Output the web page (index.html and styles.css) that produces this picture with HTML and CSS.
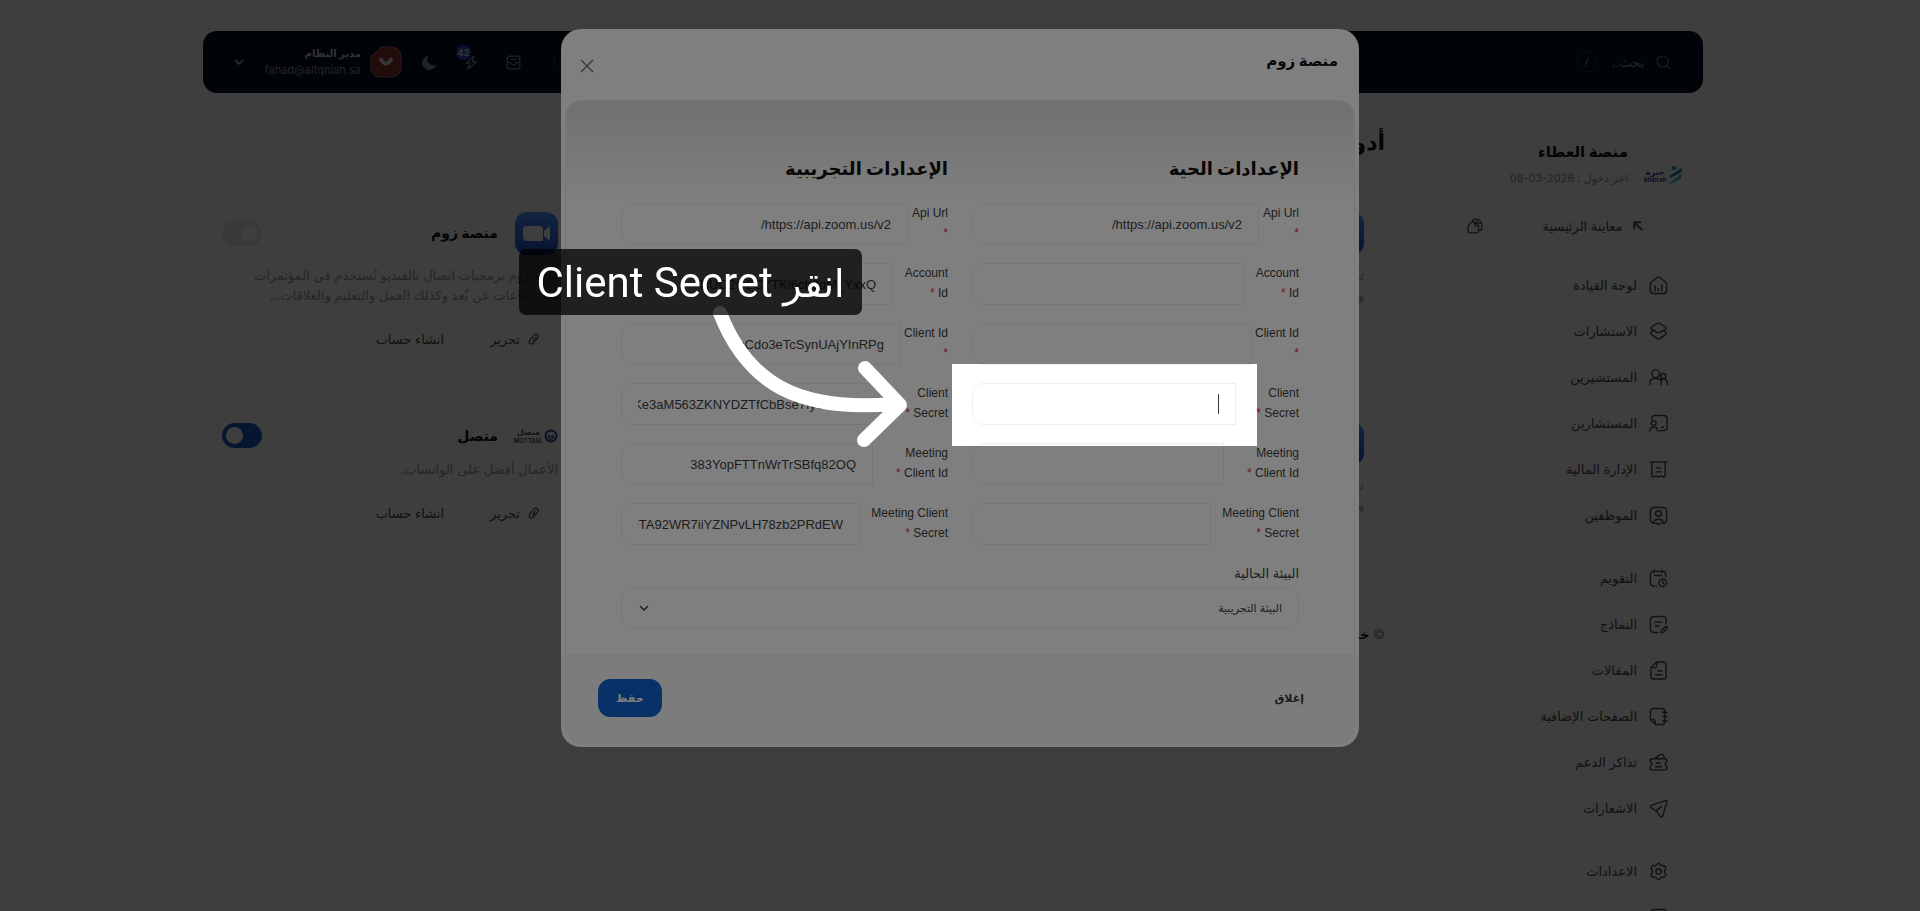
FILE: index.html
```html
<!DOCTYPE html>
<html lang="ar" dir="rtl">
<head>
<meta charset="utf-8">
<title>منصة زوم</title>
<meta name="viewport" content="width=device-width, initial-scale=1">
<link rel="stylesheet" href="styles.css">
</head>
<body>
<svg class="sprite" aria-hidden="true">
  <symbol id="i-search" viewBox="0 0 20 20"><circle cx="9.5" cy="9.5" r="8"/><path d="M15.500 15.500 18.500 18.500"/></symbol>
  <symbol id="i-inbox" viewBox="0 0 20 20"><rect x="1.500" y="1.500" width="17" height="17" rx="4"/><path d="M1.500 10h4c1 0 1 3 4.500 3s3.500-3 4.500-3h4M7 6h6"/></symbol>
  <symbol id="i-bolt" viewBox="0 0 20 20"><path d="M13 1 3 11h5l-3 8L17 9h-6z"/></symbol>
  <symbol id="i-moon" viewBox="0 0 20 20"><path fill="currentColor" stroke="none" d="M8.500 1A9.500 9.500 0 1 0 19 12.500 8 8 0 0 1 8.500 1z"/></symbol>
  <symbol id="i-chev" viewBox="0 0 10 10"><path d="M1.500 3.500 5 7l3.500-3.500"/></symbol>
  <symbol id="i-arrow" viewBox="0 0 12 12"><path stroke-width="2.200" d="M1.500 9V1.500H9M1.800 1.800 10.500 10.500"/></symbol>
  <symbol id="i-copy" viewBox="0 0 20 20"><path d="M7 4.500V4a2.500 2.500 0 0 1 2.500-2.500H14L18.500 6v7a2.500 2.500 0 0 1-2.500 2.500h-1M13 1.800V5a1.500 1.500 0 0 0 1.500 1.500h3.700"/><path d="M6 5h4l4.500 4.500V16a2.500 2.500 0 0 1-2.500 2.500H4A2.500 2.500 0 0 1 1.500 16V9.500zM9.500 5v3A1.500 1.500 0 0 0 11 9.500h3"/></symbol>
  <symbol id="i-home" viewBox="0 0 20 20"><path d="M3 6 8.500 1.800q1.500-1 3 0L17 6q1.500 1 1.500 3v6.500a3 3 0 0 1-3 3h-11a3 3 0 0 1-3-3V9Q1.500 7 3 6zM6.500 10.500v5M10 13.500v2M13.500 9.500v6"/></symbol>
  <symbol id="i-layers" viewBox="0 0 20 20"><path d="M8.500 1.800q1.500-.8 3 0L17 5q2 1.300 0 2.700L11.500 11q-1.500.8-3 0L3 7.700Q1 6.300 3 5zM4.500 9 3 10Q.8 11.800 3 13.500l5.500 4q1.500.9 3 0l5.500-4q2.200-1.700 0-3.500l-1.500-1"/></symbol>
  <symbol id="i-users" viewBox="0 0 20 20"><circle cx="7" cy="6" r="4"/><circle cx="15" cy="8.500" r="2.700"/><path d="M1 17.500v-2Q1 11 5.500 11h3q4 0 4.500 4v2.500M12.500 12.500q1-1 2.500-1 4.200 0 4.200 4.200v1.800"/></symbol>
  <symbol id="i-board" viewBox="0 0 20 20"><path d="M3 5.500V4.500a3 3 0 0 1 3-3h9.500a3.500 3.500 0 0 1 3.500 3.500v9a3.500 3.500 0 0 1-3.500 3.500H11M13 14h2.500M1 18v-1q0-3 3-3h2q3 0 3 3v1"/><circle cx="5" cy="9.500" r="2.500"/></symbol>
  <symbol id="i-bill" viewBox="0 0 20 20"><path d="M1.500 2h17M3 2v14.500q0 1.500 1.500 1.500l2-1q1-.4 2 .3 1.500 1 3 0 1-.7 2-.3l2 1q1.500 0 1.500-1.500V2M8 8.500h4M7.500 12.500h5.500"/></symbol>
  <symbol id="i-staff" viewBox="0 0 20 20"><path d="M6 18H5a3.500 3.500 0 0 1-3.500-3.500V5A3.500 3.500 0 0 1 5 1.500h10A3.500 3.500 0 0 1 18.500 5v9.500A3.500 3.500 0 0 1 15 18h-1q-2 0-3 1h-2q-1-1-3-1zM5.500 18v-1.500q0-2.500 4.500-2.500t4.500 2.500V18"/><circle cx="10" cy="8" r="3"/></symbol>
  <symbol id="i-cal" viewBox="0 0 20 20"><path d="M8 18H5a3.500 3.500 0 0 1-3.500-3.500V5.500A3 3 0 0 1 4.500 2.500h10a3 3 0 0 1 3 3V8M5.500 1v3M13.500 1v3M5.500 6.800h8"/><circle cx="14.500" cy="14.500" r="4"/><path d="M14.500 12.500v2l1 .8"/></symbol>
  <symbol id="i-form" viewBox="0 0 20 20"><path d="M9.500 18.500H5A3.500 3.500 0 0 1 1.500 15V5A3.500 3.500 0 0 1 5 1.500h9.500A3.500 3.500 0 0 1 18 5v4.500M6.500 7.500h7M6.500 11.500h4M13 16.500l4-4q1-.8 1.800 0t0 1.800l-4 4-2.300.5z"/></symbol>
  <symbol id="i-doc" viewBox="0 0 20 20"><path d="M8 1h7a3 3 0 0 1 3 3v12a3 3 0 0 1-3 3H5a3 3 0 0 1-3-3V7zM8 1v4a2 2 0 0 1-2 2H2.500M9.500 10.500h4M7 14.500h7"/></symbol>
  <symbol id="i-book" viewBox="0 0 20 20"><path d="M16.500 4.500v-.5A2.500 2.500 0 0 0 14 1.500H4.500a3 3 0 0 0-3 3v9L6.500 18.500H14a2.500 2.500 0 0 0 2.500-2.500zM1.500 13H4a2.500 2.500 0 0 1 2.500 2.500v3M14.500 5.500h4.500M14.500 10h4.500M14.500 14.500h4.500"/></symbol>
  <symbol id="i-ticket" viewBox="0 0 20 20"><path d="M4 6h12q3 0 3 2.500-2 1-2 3t2 3Q19 18 16 18H4q-3 0-3-3.500 2-1 2-3t-2-3Q1 6 4 6zM6 6l5.500-4q2.500-1.500 4 1l1 3M7.500 10.500h4M7 14.500h6.500"/></symbol>
  <symbol id="i-send" viewBox="0 0 20 20"><path d="M18 1.500 2 7Q.5 7.700 2 9l5.500 3.500L12 18.500q1.500 1.300 2.300-.5L19 3q.2-1.500-1-1.500zM7.500 12.500 13 8"/></symbol>
  <symbol id="i-gear" viewBox="0 0 20 20"><path d="M8.200 2.500q1.800-2 3.600 0 .8 1.800 3 1.200 2.500 0 3 3-.4 1.500-1.300 2.300-.4 1 0 2 1.700 1.500 1 3.200-.8 2.200-3.500 1.800-1.700 0-2.200 1.500-1.800 2-3.600 0-.8-1.800-3-1.500-2.500 0-3-2.800.3-1.500 1.200-2.300.5-1 0-2-1.600-1.500-1-3.200.8-2.300 3.600-2Q7.700 4 8.200 2.500z"/><circle cx="10" cy="10" r="2.700"/></symbol>
  <symbol id="i-pen" viewBox="0 0 14 14"><path d="M2.500 7.500 7 2.500q2-2 3.800-.5t.2 4L6.500 11.500Q5 13 3 13q-1.600-.7-1.500-2.500 0-2 1-3zM5.500 9.500l3-4"/></symbol>
</svg>

<div class="page">
  <header class="topbar">
    <label class="search"><svg class="ic ic14"><use href="#i-search"/></svg><input type="text" placeholder="بحث.." aria-label="بحث"></label>
    <kbd class="key">/</kbd>
    <div class="tools">
      <span class="bar"></span>
      <button class="plain" aria-label="الرسائل"><svg class="ic ic15"><use href="#i-inbox"/></svg></button>
      <button class="plain" aria-label="التنبيهات"><svg class="ic ic15"><use href="#i-bolt"/></svg><span class="badge">42</span></button>
      <button class="plain" aria-label="الوضع الليلي"><svg class="ic ic15"><use href="#i-moon"/></svg></button>
    </div>
    <div class="user">
      <svg class="avatar" viewBox="0 0 32 32"><path d="M11 1h11a9 9 0 0 1 9 9v12a9 9 0 0 1-9 9H10a9 9 0 0 1-9-9V11z" fill="#8a2c2c" stroke="#b96a6a"/><path d="M11 13.500q5 8 10 0" fill="none" stroke="#d8d0d0" stroke-width="4" stroke-linecap="round"/></svg>
      <div class="who"><strong>مدير النظام</strong><span>fahad@altqniah.sa</span></div>
      <svg class="ic ic10"><use href="#i-chev"/></svg>
    </div>
  </header>

  <div class="columns">
    <aside class="side">
      <div class="brand">
        <div class="logo"><span class="logotext"><b>خبرة</b><i>khibrah</i></span><svg viewBox="0 0 16 22"><rect x="4" y="1" width="5" height="4" fill="#2aa7a7"/><path d="M2 11 15 3v4L2 14z" fill="#1d7fb3"/><path d="M1 20 14 9v5L1 21z" fill="#39b7ac"/></svg></div>
        <div><h2>منصة العطاء</h2><p>اخر دخول : <bdi>08-03-2026</bdi></p></div>
      </div>
      <div class="preview"><a href="#"><svg class="ic ic10"><use href="#i-arrow"/></svg>معاينة الرئيسية</a><button aria-label="نسخ"><svg class="ic ic16"><use href="#i-copy"/></svg></button></div>
      <nav>
        <a href="#"><svg class="ic"><use href="#i-home"/></svg>لوحة القيادة</a>
        <a href="#"><svg class="ic"><use href="#i-layers"/></svg>الاستشارات</a>
        <a href="#"><svg class="ic"><use href="#i-users"/></svg>المستشيرين</a>
        <a href="#"><svg class="ic"><use href="#i-board"/></svg>المستشارين</a>
        <a href="#"><svg class="ic"><use href="#i-bill"/></svg>الإدارة المالية</a>
        <a href="#"><svg class="ic"><use href="#i-staff"/></svg>الموظفين</a>
        <hr>
        <a href="#"><svg class="ic"><use href="#i-cal"/></svg>التقويم</a>
        <a href="#"><svg class="ic"><use href="#i-form"/></svg>النماذج</a>
        <a href="#"><svg class="ic"><use href="#i-doc"/></svg>المقالات</a>
        <a href="#"><svg class="ic"><use href="#i-book"/></svg>الصفحات الإضافية</a>
        <a href="#"><svg class="ic"><use href="#i-ticket"/></svg>تذاكر الدعم</a>
        <a href="#"><svg class="ic"><use href="#i-send"/></svg>الاشعارات</a>
        <hr>
        <a href="#"><svg class="ic"><use href="#i-gear"/></svg>الاعدادات</a>
        <a href="#"><svg class="ic"><use href="#i-staff"/></svg></a>
      </nav>
    </aside>

    <main>
      <h1>أدوات الربط</h1>
      <div class="cards">
        <section class="card">
          <div class="cardhead"><span class="appicon"></span></div>
          <p>تكامل<br>وربط</p>
          <div class="actions"><button class="pill"><svg class="ic ic12"><use href="#i-pen"/></svg>تحرير</button></div>
        </section>
        <section class="card">
          <div class="cardhead">
            <svg class="appicon" viewBox="0 0 43 43"><path fill="#fafafa" d="M12 14h12q4 0 4 4v11H13q-5 0-5-4v-8q0-3 4-3zM35 14v15l-6-5v-5z"/></svg>
            <h3>منصة زوم</h3><input class="switch" type="checkbox" aria-label="منصة زوم">
          </div>
          <p>تقدم زوم برمجيات اتصال بالفيديو تُستخدم في المؤتمرات<br>والاجتماعات عن بُعد وكذلك العمل والتعليم والعلاقات...</p>
          <div class="actions"><button class="pill"><svg class="ic ic12"><use href="#i-pen"/></svg>تحرير</button><button class="pill">انشاء حساب</button></div>
        </section>
        <section class="card">
          <div class="cardhead small"><span class="appicon"></span></div>
          <p class="low">تكامل<br>وربط</p>
          <div class="actions"><button class="pill"><svg class="ic ic12"><use href="#i-pen"/></svg>تحرير</button></div>
        </section>
        <section class="card">
          <div class="cardhead small">
            <div class="mottasl"><svg viewBox="0 0 14 14"><circle cx="7" cy="7" r="5.500" fill="none" stroke="#2a4a8c" stroke-width="2"/><path d="M4 6q3 3 6 0M4 8q3 4 6 0" fill="none" stroke="#2a4a8c" stroke-width="1.500"/></svg><span><b>متصل</b><i>MOTTASL</i></span></div>
            <h3>متصل</h3><input class="switch" type="checkbox" checked aria-label="متصل">
          </div>
          <p>الأعمال أفضل على الواتساب.</p>
          <div class="actions"><button class="pill"><svg class="ic ic12"><use href="#i-pen"/></svg>تحرير</button><button class="pill">انشاء حساب</button></div>
        </section>
      </div>
      <footer>© <b>خبرة</b></footer>
    </main>
  </div>
</div>

<div class="backdrop">
  <div class="modal" role="dialog" aria-labelledby="mt">
    <div class="modalhead"><h2 id="mt">منصة زوم</h2><button class="close" aria-label="إغلاق"><svg viewBox="0 0 12 12"><path d="M0 0 12 12M12 0 0 12"/></svg></button></div>
    <form class="panel">
      <div class="fields">
        <fieldset>
          <h3>الإعدادات الحية</h3>
          <div class="row w1"><label for="a1">Api Url <em>*</em></label><input id="a1" type="text" value="https://api.zoom.us/v2/"></div>
          <div class="row w2"><label for="a2">Account Id <em>*</em></label><input id="a2" type="text"></div>
          <div class="row w3"><label for="a3">Client Id <em>*</em></label><input id="a3" type="text"></div>
          <div class="row w4"><label for="a4">Client Secret <em>*</em></label><div class="spot"><input id="a4" type="text"><span class="cursor"></span></div></div>
          <div class="row w5"><label for="a5">Meeting Client Id <em>*</em></label><input id="a5" type="text"></div>
          <div class="row w6"><label for="a6">Meeting Client Secret <em>*</em></label><input id="a6" type="text"></div>
        </fieldset>
        <fieldset>
          <h3>الإعدادات التجريبية</h3>
          <div class="row w1"><label for="b1">Api Url <em>*</em></label><input id="b1" type="text" value="https://api.zoom.us/v2/"></div>
          <div class="row w2"><label for="b2">Account Id <em>*</em></label><input id="b2" type="text" value="NUO2Q2CYTKi6ch9oM_YxxQ"></div>
          <div class="row w3"><label for="b3">Client Id <em>*</em></label><input id="b3" type="text" value="zuCdo3eTcSynUAjYInRPg"></div>
          <div class="row w4"><label for="b4">Client Secret <em>*</em></label><input id="b4" type="text" value="Ke3aM563ZKNYDZTfCbBse7fyGmRxTd"></div>
          <div class="row w5"><label for="b5">Meeting Client Id <em>*</em></label><input id="b5" type="text" value="383YopFTTnWrTrSBfq82OQ"></div>
          <div class="row w6"><label for="b6">Meeting Client Secret <em>*</em></label><input id="b6" type="text" value="K_HTA92WR7iiYZNPvLH78zb2PRdEW"></div>
        </fieldset>
      </div>
      <div class="env"><label for="env">البيئة الحالية</label>
        <div class="selectwrap"><select id="env"><option>البيئة التجريبية</option></select><svg class="ic ic10"><use href="#i-chev"/></svg></div></div>
      <div class="modalfoot"><button type="button" class="btn">إغلاق</button><button type="button" class="btn save">حفظ</button></div>
    </form>
  </div>
</div>

<div class="tour">
  <svg class="pointer" viewBox="0 0 210 150"><path d="M10 12C38 84 90 111 184 103M155 67 190 104 154 139"/></svg>
  <div class="tip"><span>انقر</span> <bdi>Client Secret</bdi></div>
</div>
</body>
</html>
```

FILE: styles.css
```css
* { box-sizing: border-box; margin: 0; padding: 0; }
html { overflow: hidden; }
body { height: 100vh; overflow: hidden; padding-right: 14px; direction: ltr; background: #fafafa; font: 13px/20px Inter, "DejaVu Sans", sans-serif; color: #484848; }
.page, .backdrop, .tour { direction: rtl; }
button, input, select { font: inherit; color: inherit; }
button { cursor: pointer; }
a { color: inherit; text-decoration: none; }
.sprite { display: none; }
.ic { width: 20px; height: 20px; flex: none; fill: none; stroke: currentColor; stroke-width: 1.5; stroke-linecap: round; stroke-linejoin: round; }
.ic10 { width: 10px; height: 10px; }
.ic12 { width: 12px; height: 12px; }
.ic14 { width: 14px; height: 14px; }
.ic15 { width: 15px; height: 15px; }
.ic16 { width: 16px; height: 16px; }

.page { max-width: 1500px; margin: 0 auto; padding-top: 31px; }

.topbar { display: flex; align-items: center; height: 62px; padding: 0 33px 0 31px; border-radius: 14px; background: #030f1e; color: #8c8c8c; }
.search { display: flex; align-items: center; gap: 12px; }
.search input { width: 48px; border: 0; outline: 0; background: none; color: #8c8c8c; }
.search input::placeholder { color: #8c8c8c; opacity: 1; }
.key { width: 19px; height: 20px; border: 1px solid #222c3a; border-radius: 4px; font: 11px/18px Inter, sans-serif; text-align: center; }
.tools { display: flex; align-items: center; gap: 27px; margin-right: auto; }
.bar { width: 1px; height: 16px; background: #263040; margin-left: 6px; }
.plain { position: relative; display: flex; border: 0; background: none; }
.badge { position: absolute; left: -8px; top: -10px; width: 15px; height: 15px; border-radius: 8px; background: #1b50b4; color: #d8d8d8; font: 700 9px/15px Inter, sans-serif; text-align: center; }
.user { display: flex; align-items: center; margin-right: 20px; }
.avatar { width: 32px; height: 32px; }
.who { width: 114px; margin-right: 9px; display: flex; flex-direction: column; font-size: 11px; line-height: 17px; }
.who strong { color: #c8c8c8; font-weight: 700; font-size: 10px; }
.user .ic { margin-right: 3px; color: #c8c8c8; }

.columns { display: flex; justify-content: space-between; padding-right: 20px; }
.side { width: 236px; padding-top: 46px; flex: none; }
.brand { display: flex; align-items: center; gap: 16px; height: 52px; margin-bottom: 12px; }
.brand h2 { font-size: 15px; line-height: 26px; color: #101010; font-weight: 700; }
.brand p { font-size: 11px; line-height: 26px; color: #909090; }
.logo { display: flex; flex-direction: row-reverse; align-items: center; gap: 2px; width: 39px; padding-top: 20px; }
.logo svg { width: 15px; height: 21px; flex: none; }
.logotext { display: flex; flex-direction: column; color: #5a2a86; line-height: 8px; text-align: center; }
.logotext b { font-size: 8px; }
.logotext i { font: 700 6px/7px Inter, sans-serif; }
.preview { display: flex; height: 46px; border: 1px solid #ececec; border-radius: 14px; }
.preview a { flex: 1; display: flex; align-items: center; justify-content: center; gap: 10px; }
.preview button { width: 55px; border: 0; border-right: 1px solid #ececec; background: none; display: grid; place-items: center; }
nav { padding-top: 13px; }
nav a { display: flex; align-items: center; gap: 12px; height: 46px; padding-right: 15px; }
nav .ic { width: 19px; height: 19px; }
nav hr { border: 0; border-top: 1px solid #ececec; margin: 5px 0 11px; }

main { width: 1184px; margin-left: -2px; padding-top: 34px; }
h1 { font-size: 22px; line-height: 30px; color: #101010; margin-bottom: 33px; }
.cards { display: grid; grid-template-columns: 378px 378px; justify-content: space-between; row-gap: 25px; }
.card { height: 186px; padding: 20px; border: 1px solid #ececec; border-radius: 14px; }
.cardhead { display: flex; align-items: center; height: 44px; gap: 17px; }
.cardhead.small { height: 27px; }
.appicon { width: 43px; height: 43px; border-radius: 12px; background: linear-gradient(#4a94ff, #1c50cc); }
.small .appicon { align-self: flex-start; }
.card h3 { font-size: 14px; color: #101010; }
.switch { appearance: none; width: 40px; height: 25px; border-radius: 13px; background: #e4e4e4; margin-right: auto; padding: 4px; }
.switch::before { content: ""; display: block; width: 17px; height: 17px; border-radius: 9px; background: #fafafa; }
.switch:checked { background: #1c5bc0; }
.switch:checked::before { margin-right: auto; }
.card p { margin: 10px 0 17px; color: #999; white-space: nowrap; }
.card p.low { margin-top: 26px; }
.actions { display: flex; gap: 10px; }
.pill { display: flex; align-items: center; justify-content: center; gap: 8px; height: 34px; padding: 0 17px; border: 1px solid #ececec; border-radius: 12px; background: none; }
.mottasl { display: flex; align-items: center; width: 43px; gap: 1px; color: #555; }
.mottasl svg { width: 14px; height: 14px; flex: none; }
.mottasl span { display: flex; flex-direction: column; text-align: center; }
.mottasl b { font-size: 8px; line-height: 9px; }
.mottasl i { font: 700 6px/7px Inter, sans-serif; }
footer { margin-top: 37px; color: #909090; }
footer b { color: #101010; }

.backdrop { position: fixed; inset: 0; display: flex; justify-content: center; align-items: flex-start; padding-top: 29px; background: rgba(0, 0, 0, .5); }
.modal { width: 798px; padding: 0 4px 4px; border-radius: 20px; background: #fff; font-size: 12px; }
.modalhead { display: flex; justify-content: space-between; align-items: flex-start; height: 71px; padding: 22px 17px 0 16px; }
.modalhead h2 { font-size: 15px; line-height: 20px; color: #111; }
.close { width: 12px; height: 12px; margin-top: 9px; border: 0; background: none; display: flex; }
.close svg { width: 12px; height: 12px; fill: none; stroke: #666; stroke-width: 1.2; overflow: visible; }
.panel { border: 1px solid #efefef; border-radius: 16px; background: linear-gradient(#e2e2e7, #f0f0f2 50px, #fff 105px); overflow: hidden; }
.fields { display: grid; grid-template-columns: 1fr 1fr; gap: 24px; padding: 53px 55px 0; }
fieldset { border: 0; min-width: 0; }
fieldset h3 { font-size: 18px; line-height: 30px; color: #111; margin-bottom: 19px; }
.row { display: flex; height: 60px; font: 13px/20px "Liberation Sans", "DejaVu Sans", sans-serif; color: #3c3c3c; }
.row label { flex: none; font-size: 12px; }
.row em { font-style: normal; color: #e02a3a; }
.w1 label { width: 40px; }
.w2 label { width: 55px; padding-left: 8px; }
.w3 label { width: 47px; }
.w1 em, .w3 em { display: block; }
.w1 label, .w3 label { white-space: nowrap; }
.w4 label { width: 63px; padding-left: 10px; }
.w5 label { width: 75px; }
.w6 label { width: 88px; }
.row input { flex: 1; min-width: 0; width: 100%; height: 42px; padding: 0 16px; border: 1px solid #efefef; border-radius: 12px 0 0 12px; background: transparent; outline: 0; }
.spot { position: relative; flex: 1; }
.cursor { position: absolute; right: 17px; top: 11px; width: 1px; height: 20px; background: #333; }
.env { padding: 0 55px 25px; }
.env label { display: block; font-size: 13px; line-height: 20px; color: #3c3c3c; margin-bottom: 4px; }
.selectwrap { position: relative; color: #3c3c3c; }
.selectwrap select { display: block; width: 100%; height: 42px; appearance: none; border: 1px solid #efefef; border-radius: 12px; background: transparent; padding: 0 16px; font-size: 11px; }
.selectwrap .ic { position: absolute; left: 18px; top: 16px; }
.modalfoot { display: flex; justify-content: space-between; height: 88px; padding: 24px 32px; border-top: 1px solid #efefef; background: #f9f9f9; }
.btn { height: 38px; padding: 0 17px; border: 1px solid #efefef; border-radius: 12px; background: none; font-size: 11px; font-weight: 700; color: #333; }
.btn.save { border-color: #1162ce; background: #1162ce; color: #fff; }

.tour { position: fixed; top: 364px; left: 50%; width: 305px; height: 82px; margin-left: -8px; box-shadow: 0 0 0 2000px rgba(0, 0, 0, .5); }
.tip { position: absolute; left: -433px; top: -115px; width: 343px; height: 66px; border-radius: 7px; background: rgba(0, 0, 0, .75); color: #fff; font: 42px/68px Roboto, "DejaVu Sans", sans-serif; text-align: center; white-space: nowrap; }
.tip span { font-size: 38px; }
.pointer { position: absolute; left: -242px; top: -63px; width: 210px; height: 150px; fill: none; stroke: #fff; stroke-width: 14; stroke-linecap: round; stroke-linejoin: round; }
```
